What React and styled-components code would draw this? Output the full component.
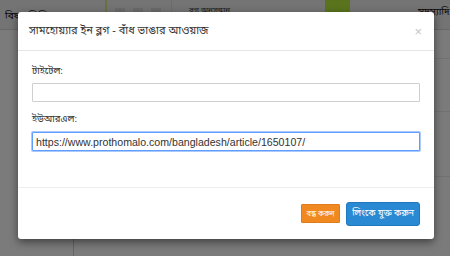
import React from "react";
import styled, { createGlobalStyle } from "styled-components";

const bn = `"Noto Sans Bengali", "Lohit Bengali", "Noto Sans", "Liberation Sans", sans-serif`;

const GlobalStyle = createGlobalStyle`
  html, body {
    margin: 0;
    padding: 0;
    width: 450px;
    height: 256px;
    overflow: hidden;
    font-family: ${bn};
  }
`;

const Page = styled.div`
  position: relative;
  width: 450px;
  height: 256px;
  background: #f7f7f7;
  overflow: hidden;
  display: flex;
  flex-direction: column;
`;

const TopBar = styled.div`
  display: flex;
  align-items: stretch;
  height: 29px;
  background: #e8e8e8;
  border-bottom: 1px solid #d0d0d0;
`;

const Brand = styled.div`
  width: 100px;
  padding: 10px 0 0 5px;
  font-size: 10px;
  color: #111;
  border-right: 2px solid #d8e07a;
`;

const IconGroup = styled.div`
  display: flex;
  gap: 8px;
  padding: 8px 10px 0 8px;
  border-right: 1px solid #d8d8d8;
`;

const IconBox = styled.span`
  width: 10px;
  height: 10px;
  background: #d4d4d4;
`;

const Search = styled.div`
  flex: 1;
  padding: 6px 0 0 17px;
  font-size: 8px;
  color: #444;
`;

const SearchBtn = styled.div`
  width: 25px;
  height: 16px;
  background: #b4e83a;
`;

const Member = styled.div`
  width: 100px;
  box-sizing: border-box;
  padding: 6px 0 0 68px;
  font-size: 10px;
  color: #111;
  white-space: nowrap;
  overflow: hidden;
`;

const Content = styled.div`
  flex: 1;
  display: flex;
`;

const SideCol = styled.div`
  width: 73px;
  border-right: 1px solid #c8c8c8;
`;

const MainCol = styled.div`
  flex: 1;
  display: flex;
  flex-direction: column;
`;

const Row = styled.div`
  height: ${(p) => p.$h}px;
  border-bottom: 1px solid #e2e2e2;
`;

const Backdrop = styled.div`
  position: absolute;
  inset: 0;
  background: rgba(0, 0, 0, 0.5);
`;

const Modal = styled.div`
  position: absolute;
  left: 18px;
  top: 12px;
  width: 416px;
  height: 227px;
  background: #fff;
  border-radius: 3px;
  box-shadow: 0 3px 9px rgba(0, 0, 0, 0.5);
  display: flex;
  flex-direction: column;
`;

const Header = styled.div`
  display: flex;
  align-items: center;
  justify-content: space-between;
  height: 38px;
  padding: 0 12px 0 11px;
  border-bottom: 1px solid #e5e5e5;
`;

const Title = styled.h4`
  margin: 0;
  font-size: 11px;
  font-weight: normal;
  color: #333;
`;

const Close = styled.span`
  font-family: "Liberation Sans", sans-serif;
  font-size: 13px;
  color: #c4c4c4;
`;

const Body = styled.div`
  flex: 1;
  padding: 14px 14px 0 14px;
  border-bottom: 1px solid #eeeeee;
`;

const Field = styled.div`
  display: flex;
  flex-direction: column;
  gap: ${(p) => (p.$second ? 5 : 4)}px;
  margin-bottom: 11px;
`;

const Label = styled.label`
  font-size: 9.5px;
  color: #333;
  line-height: 14px;
`;

const Input = styled.input`
  box-sizing: border-box;
  height: 19px;
  width: 100%;
  margin: 0;
  padding: 0 3px;
  font-family: "Liberation Sans", sans-serif;
  font-size: 10.6px;
  color: #333;
  border: 1px solid ${(p) => (p.$focus ? "#5f9dff" : "#cfcfcf")};
  box-shadow: ${(p) => (p.$focus ? "0 0 0 1px #a9c9ff" : "none")};
  border-radius: 1px;
  outline: none;
`;

const Footer = styled.div`
  display: flex;
  justify-content: flex-end;
  align-items: center;
  gap: 6px;
  height: 51px;
  padding: 0 14px;
`;

const Button = styled.button`
  font-family: ${bn};
  color: #fff;
  border: 1px solid ${(p) => (p.$primary ? "#1f77bd" : "#e07c1c")};
  background: ${(p) => (p.$primary ? "#2a89d3" : "#f0891f")};
  border-radius: ${(p) => (p.$primary ? "3px" : "1px")};
  height: ${(p) => (p.$primary ? "24px" : "19px")};
  width: ${(p) => (p.$primary ? "74px" : "39px")};
  padding: 0;
  font-size: ${(p) => (p.$primary ? "9px" : "7.5px")};
  white-space: nowrap;
  cursor: pointer;
`;

export default function App() {
  return (
    <>
      <GlobalStyle />
      <Page>
        <TopBar>
          <Brand>বিষয় ভিত্তিক ব্লগ</Brand>
          <IconGroup>
            <IconBox />
            <IconBox />
            <IconBox />
          </IconGroup>
          <Search>ব্লগ অনুসন্ধান</Search>
          <SearchBtn />
          <Member>সদস্যাদি</Member>
        </TopBar>
        <Content>
          <SideCol />
          <MainCol>
            <Row $h={28} />
            <Row $h={52} />
            <Row $h={64} />
          </MainCol>
        </Content>
        <Backdrop />
        <Modal>
          <Header>
            <Title>সামহোয়্যার ইন ব্লগ - বাঁধ ভাঙার আওয়াজ</Title>
            <Close>×</Close>
          </Header>
          <Body>
            <Field>
              <Label>টাইটেল:</Label>
              <Input type="text" defaultValue="" />
            </Field>
            <Field $second>
              <Label>ইউআরএল:</Label>
              <Input
                $focus
                type="text"
                defaultValue="https://www.prothomalo.com/bangladesh/article/1650107/"
              />
            </Field>
          </Body>
          <Footer>
            <Button>বন্ধ করুন</Button>
            <Button $primary>লিংকে যুক্ত করুন</Button>
          </Footer>
        </Modal>
      </Page>
    </>
  );
}
